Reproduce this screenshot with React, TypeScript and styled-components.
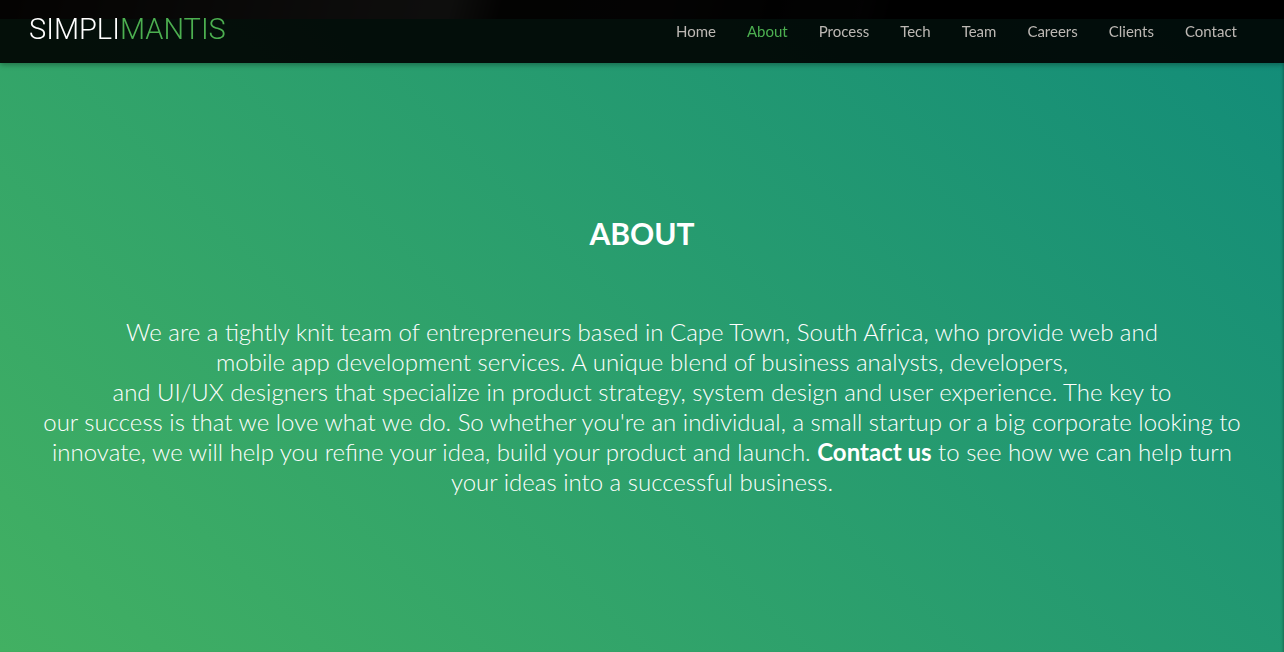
import React from "react";
import styled, { createGlobalStyle } from "styled-components";

const GlobalStyle = createGlobalStyle`
  *, *::before, *::after { box-sizing: border-box; }
  html, body { margin: 0; }
  body {
    font-family: Lato, "Liberation Sans", sans-serif;
    background: #42b062;
    color: #fff;
  }
  html, body, #root { height: 100%; }
`;

const Page = styled.div`
  display: flex;
  flex-direction: column;
  min-height: 100%;
`;

const Header = styled.header`
  position: fixed;
  inset: 0 0 auto 0;
  z-index: 10;
  display: flex;
  align-items: flex-start;
  justify-content: space-between;
  height: 63px;
  padding: 0 32px 0 29px;
  background: rgba(0, 0, 0, 0.91);
  box-shadow: 0 2px 5px rgba(0, 0, 0, 0.3);
`;

const Logo = styled.a`
  padding-top: 11px;
  font-family: Roboto, "Liberation Sans", sans-serif;
  font-size: 29px;
  font-weight: 300;
  line-height: 36px;
  color: #fff;
  text-decoration: none;
`;

const LogoAccent = styled.span`
  color: #4caf50;
`;

const NavList = styled.ul`
  display: flex;
  gap: 1px;
  margin: 0;
  padding: 0;
  list-style: none;
`;

const NavLink = styled.a<{ $active?: boolean }>`
  display: block;
  padding: 0 15px;
  font-size: 15px;
  line-height: 63px;
  color: ${({ $active }) => ($active ? "#4caf50" : "#bdb8b4")};
  text-decoration: none;
`;

const Hero = styled.div`
  flex: none;
  height: 19px;
  background: linear-gradient(
    105deg,
    #302418 0%,
    #8c8880 28%,
    #9c9c94 35%,
    #28241c 39%,
    #2c2824 52%,
    #141414 60%,
    #201c20 67%,
    #000 70%
  );
`;

const AboutSection = styled.section`
  flex: 1;
  padding: 195px 32px 152px;
  text-align: center;
  background: linear-gradient(45deg, #42b062, #128c79);
  box-shadow: inset -3px 0 3px -2px rgba(0, 0, 0, 0.3);
`;

const Title = styled.h2`
  margin: 0 0 65px;
  font-size: 30px;
  font-weight: 700;
  line-height: 38px;
`;

const Intro = styled.p`
  margin: 0;
  font-size: 24px;
  font-weight: 300;
  line-height: 30px;
`;

const ContactLink = styled.a`
  font-weight: 700;
  color: #fff;
  text-decoration: none;
`;

const links = ["Home", "About", "Process", "Tech", "Team", "Careers", "Clients", "Contact"];

export default function App() {
  return (
    <Page>
      <GlobalStyle />
      <Header>
        <Logo href="#home">
          SIMPLI<LogoAccent>MANTIS</LogoAccent>
        </Logo>
        <nav>
          <NavList>
            {links.map((label) => (
              <li key={label}>
                <NavLink href={`#${label.toLowerCase()}`} $active={label === "About"}>
                  {label}
                </NavLink>
              </li>
            ))}
          </NavList>
        </nav>
      </Header>
      <Hero />
      <AboutSection id="about">
        <Title>ABOUT</Title>
        <Intro>
          We are a tightly knit team of entrepreneurs based in Cape Town, South Africa, who provide web and
          <br />
          mobile app development services. A unique blend of business analysts, developers,
          <br />
          and UI/UX designers that specialize in product strategy, system design and user experience. The key to
          <br />
          our success is that we love what we do. So whether you're an individual, a small startup or a big corporate
          looking to
          <br />
          innovate, we will help you refine your idea, build your product and launch.{" "}
          <ContactLink href="#contact">Contact us</ContactLink> to see how we can help turn
          <br />
          your ideas into a successful business.
        </Intro>
      </AboutSection>
    </Page>
  );
}
